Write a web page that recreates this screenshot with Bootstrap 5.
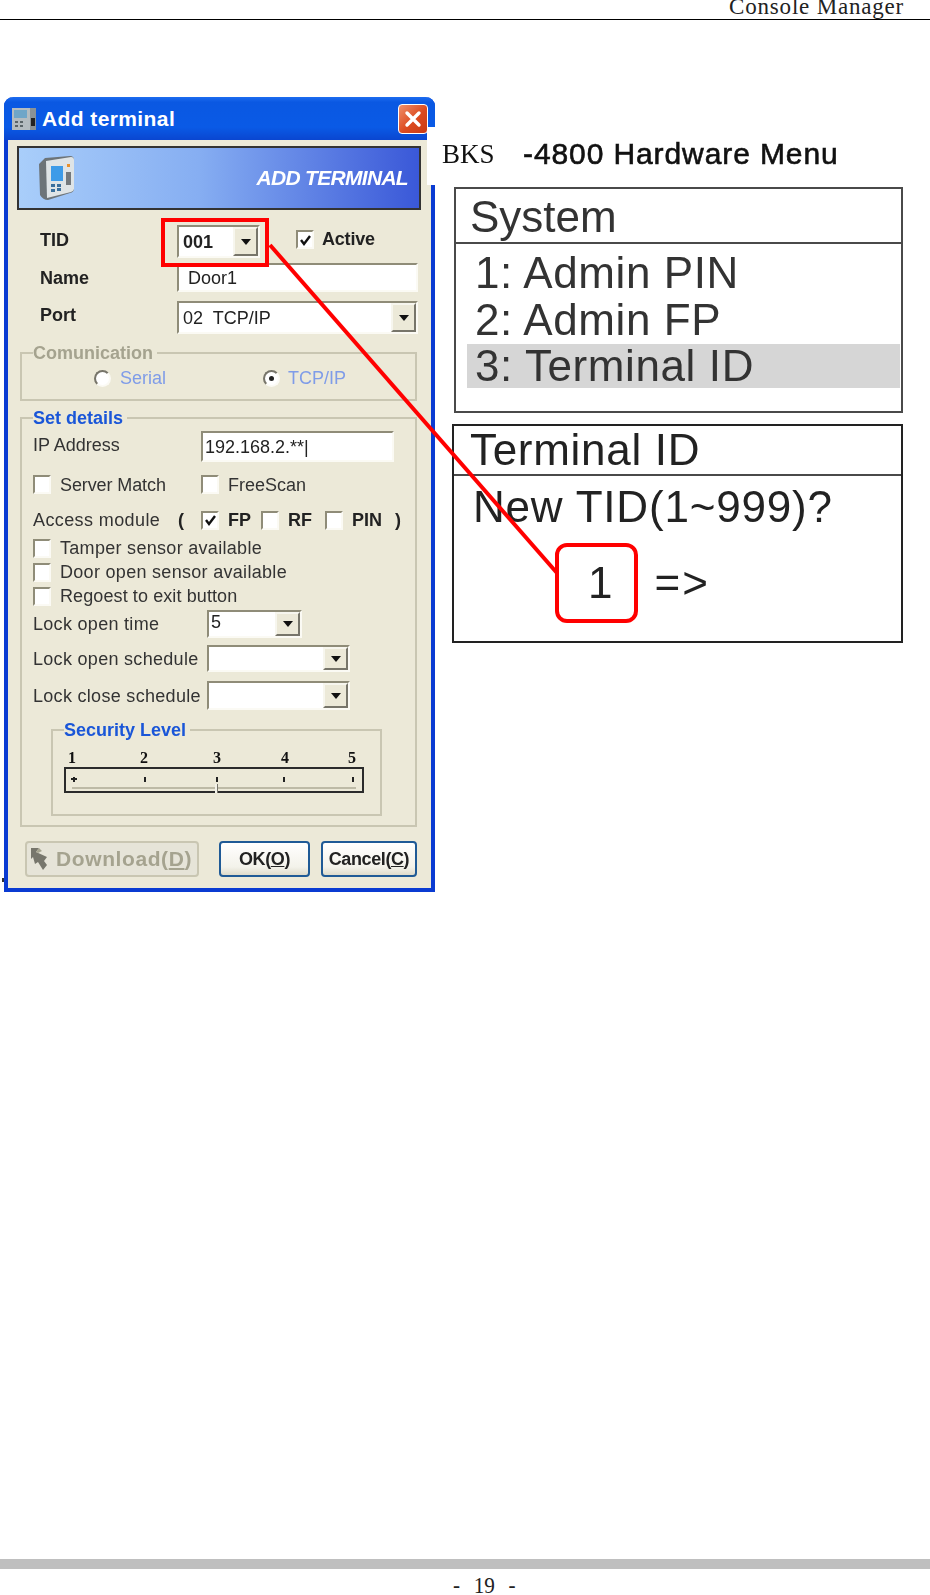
<!DOCTYPE html>
<html lang="en">
<head>
  <meta charset="UTF-8" />
  <meta name="viewport" content="width=device-width, initial-scale=1" />
  <title>Console Manager - 19</title>
  <link href="https://cdn.jsdelivr.net/npm/bootstrap@5.3.3/dist/css/bootstrap.min.css" rel="stylesheet" />
  <style>
    body { font-family: "Liberation Sans", Arial, sans-serif; color: #000; background: #fff; position: relative; }
    .page-head { height: 20px; border-bottom: 1px solid #000; padding-right: 26px; font: 23px/14px "Liberation Serif", serif; letter-spacing: .8px; color: #222; }
    .page-foot-bar { height: 10px; background: #bfbfbf; }
    .page-foot-num { height: 26px; padding-left: 42px; font: 23px/34px "Liberation Serif", serif; word-spacing: 9px; color: #222; transform: scaleX(.92); }

    .dlg { width: 431px; height: 795px; margin: 77px 0 0 4px; background: #ece9d8; border: solid #0a3bd2; border-width: 0 4px 4px; border-radius: 9px 9px 0 0; font-size: 18px; line-height: 20px; color: #333; flex: none; filter: blur(.35px); }
    .dlg-title { height: 43px; margin: 0 -4px; padding: 0 8px; border-radius: 9px 9px 0 0; background: linear-gradient(#1d6cf0, #0a58e2 12%, #0a5ae6 70%, #0a46d0); color: #fff; font-weight: 700; font-size: 21px; }
    .dlg-title span { margin-left: 6px; letter-spacing: .4px; }
    .dlg-close { width: 30px; height: 30px; margin-left: auto; margin-right: -1px; background: linear-gradient(135deg, #f0906a, #dc4a20 55%, #c83a14); border: 1px solid #fff; border-radius: 4px; }
    .dlg-banner { width: 404px; height: 64px; margin: 6px 0 0 9px; border: 2px solid #333; background: linear-gradient(90deg, #a9cefa, #86aef2 45%, #3a58d8); padding: 0 11px 0 19px; }
    .dlg-banner b { margin-left: auto; color: #fff; font-size: 21px; font-style: italic; letter-spacing: -.7px; }

    .frm-row { display: flex; align-items: center; }
    .frm-bold { font-weight: 700; color: #222; }
    .frm-lbl-top { width: 169px; padding: 0 0 4px 32px; flex: none; }
    .frm-lbl-name { padding-bottom: 0; }
    .frm-lbl-port { padding-bottom: 6px; }
    .frm-lbl-set { width: 168px; padding-bottom: 3px; flex: none; }
    .frm-lbl-lock { width: 174px; flex: none; letter-spacing: .3px; }
    .frm-box { background: #fff; border: 2px solid; border-color: #8f8c78 #fbfaf4 #fbfaf4 #8f8c78; display: flex; align-items: center; padding-left: 4px; color: #222; flex: none; }
    .frm-combo { padding-right: 0; }
    .frm-combo i { width: 25px; height: 100%; margin-left: auto; background: #ece9d8; border: 2px solid; border-color: #f7f6ee #77756a #77756a #f7f6ee; display: flex; align-items: center; justify-content: center; flex: none; }
    .frm-combo i::after { content: ""; border: 5px solid transparent; border-top: 6px solid #111; border-bottom: 0; }
    .frm-chk { width: 18px; height: 19px; background: #fff; border: 2px solid; border-color: #8f8c78 #fbfaf4 #fbfaf4 #8f8c78; flex: none; display: flex; align-items: center; justify-content: center; }
    .frm-radio { width: 17px; height: 17px; border-radius: 50%; background: #fff; border: 2px solid; border-color: #77756a #fbfaf4 #fbfaf4 #77756a; flex: none; display: flex; align-items: center; justify-content: center; }
    .frm-radio.on::after { content: ""; width: 5px; height: 5px; border-radius: 50%; background: #222; }
    .frm-txt { margin-left: 9px; }
    .frm-long { letter-spacing: .3px; }

    .r-tid { margin-top: 15px; height: 33px; }
    .r-name { margin-top: 5px; height: 29px; }
    .r-port { margin-top: 9px; height: 33px; }
    .r-radio { margin-top: 14px; padding-left: 72px; }
    .r-ip { margin-top: 12px; height: 31px; }
    .r-match { margin-top: 13px; height: 19px; }
    .r-access { margin-top: 16px; height: 20px; }
    .r-chk1 { margin-top: 9px; height: 18px; }
    .r-chk2 { margin-top: 6px; height: 18px; }
    .r-lock1 { margin-top: 5px; height: 28px; }
    .r-lock2 { margin-top: 7px; height: 27px; }
    .r-lock3 { margin-top: 9px; height: 29px; }

    .w-tid { width: 83px; height: 33px; }
    .w-name { width: 241px; height: 29px; padding-left: 9px; }
    .w-port { width: 241px; height: 33px; }
    .w-ip { width: 193px; height: 31px; padding-left: 2px; }
    .w-time { width: 95px; height: 28px; padding: 0 0 4px 2px; }
    .w-time i { height: calc(100% + 4px); margin-bottom: -4px; }
    .w-sch { width: 143px; height: 27px; }
    .w-sch-b { width: 143px; height: 29px; }
    .m-active { margin: 0 0 4px 36px; }
    .m-active-t { margin: 0 0 5px 8px; letter-spacing: -.2px; }
    .t-serial { margin-left: 9px; width: 143px; }
    .t-tcp { margin-left: 8px; }
    .t-match { width: 141px; letter-spacing: -.1px; }
    .t-access { width: 145px; flex: none; letter-spacing: .4px; }
    .t-paren { width: 23px; flex: none; }
    .t-fp { width: 33px; }
    .t-rf { width: 37px; }
    .t-pin { width: 43px; }
    .t-regoest { letter-spacing: .1px; }

    .grp { position: relative; border: 2px solid #c9c6b2; flex: none; }
    .grp-title { position: absolute; left: 11px; top: -10px; padding-right: 4px; background: #ece9d8; font-weight: 700; color: #1a56d8; line-height: 18px; }
    .grp-title.off { color: #a5a38f; }
    .grp-comm { width: 397px; height: 49px; margin: 18px 0 0 12px; color: #7f9ce8; }
    .grp-set { width: 397px; height: 410px; margin: 16px 0 0 12px; padding-left: 11px; }
    .grp-sec { width: 331px; height: 87px; margin: 19px 0 0 18px; }
    .sec-nums { height: 16px; margin-top: 19px; position: relative; font: 700 16px/16px "Liberation Serif", serif; color: #111; }
    .sec-nums span { position: absolute; top: 0; transform: translateX(-50%); }
    .sec-n1 { left: 19px; } .sec-n2 { left: 91px; } .sec-n3 { left: 164px; } .sec-n4 { left: 232px; } .sec-n5 { left: 299px; }
    .sec-track { width: 300px; height: 26px; margin: 1px 0 0 11px; border: 2px solid #2b2b2b; position: relative; }
    .sec-track em { position: absolute; top: 8px; width: 2px; height: 5px; background: #222; }
    .sec-t1 { left: 7px; } .sec-t2 { left: 78px; } .sec-t3 { left: 150px; } .sec-t4 { left: 217px; } .sec-t5 { left: 286px; }
    .sec-t1::after { content: ""; position: absolute; left: -2px; top: 1px; width: 6px; height: 2px; background: #222; }
    .sec-track u { position: absolute; left: 6px; right: 6px; top: 18px; height: 2px; background: #bdbaa6; }
    .sec-track s { position: absolute; left: 149px; top: 15px; width: 3px; height: 9px; background: #f4f3ea; border-right: 1px solid #77756a; }

    .dlg-btns { margin: 14px 0 0 17px; }
    .dlg-btn { height: 36px; padding: 0; border-radius: 4px; background: linear-gradient(#fff, #f3f2ea 75%, #dedbcb); border: 2px solid #1f5a96; font-weight: 700; color: #222; font-size: 18px; letter-spacing: -.4px; }
    .dlg-btn.off { width: 174px; padding-left: 3px; background: #e6e4d8; border-color: #c9c6b2; color: #a5a38f; font-size: 21px; letter-spacing: .6px; }
    .dlg-btn.off > span { margin-left: 6px; }
    .b-ok { width: 91px; margin-left: 20px; }
    .b-cancel { width: 96px; margin-left: 11px; }
    .speck { position: absolute; left: 2px; top: 878px; width: 2px; height: 4px; background: #333; }

    .hw-col { width: 476px; margin: 107px 0 0 -8px; position: relative; flex: none; }
    .hw-col > * { filter: blur(.4px); }
    .hw-head { height: 58px; background: #fff; padding: 0 0 4px 15px; }
    .hw-bks { width: 81px; font: 27px/1 "Liberation Serif", serif; color: #111; flex: none; }
    .hw-name { font-size: 30px; line-height: 1; color: #111; letter-spacing: .9px; -webkit-text-stroke: .6px #111; white-space: pre; }
    .hw-box { border: 2px solid #4a4a4a; font-size: 44px; line-height: 48px; color: #333; }
    .hw-sys { width: 449px; height: 226px; margin: 2px 0 0 27px; }
    .hw-term { width: 451px; height: 219px; margin: 11px 0 0 25px; border-color: #222; color: #222; }
    .hw-sep { height: 55px; border-bottom: 2px solid #4a4a4a; padding: 2px 0 0 14px; }
    .hw-items { padding: 6px 0 0 19px; letter-spacing: .6px; }
    .hw-items div { height: 47px; line-height: 46px; }
    .hw-items .hw-pick { background: #d6d6d6; margin: 0 1px 0 -8px; padding-left: 8px; height: 44px; line-height: 44px; }
    .hw-term .hw-sep { height: 50px; letter-spacing: .7px; padding: 0 0 0 16px; }
    .hw-ask { padding: 7px 0 0 19px; letter-spacing: .8px; white-space: nowrap; }
    .hw-entry { padding: 28px 0 0 134px; gap: 42px; }
    .hw-entry span:last-child { letter-spacing: 2px; }

    .over-marks { position: absolute; left: 0; top: 0; pointer-events: none; z-index: 5; }
  </style>
</head>
<body class="d-flex flex-column min-vh-100">
  <div class="page-head d-flex justify-content-end">Console Manager</div>

  <div class="d-flex align-items-start">
    <!-- dialog -->
    <div class="dlg">
      <div class="dlg-title d-flex align-items-center">
        <svg width="24" height="24" viewBox="0 0 24 24">
          <rect x="0" y="1" width="18" height="22" fill="#b4bcc0"/>
          <rect x="2" y="3" width="13" height="8" fill="#6fa6c8"/>
          <path d="M3 14h3v2H3zM8 14h3v2H8zM3 18h3v2H3zM8 18h3v2H8z" fill="#5a6468"/>
          <rect x="18" y="1" width="6" height="22" fill="#8a9296"/>
          <rect x="19" y="11" width="4" height="8" fill="#222"/>
        </svg>
        <span>Add terminal</span>
        <div class="dlg-close d-flex align-items-center justify-content-center">
          <svg width="18" height="18" viewBox="0 0 18 18"><path d="M3 3L15 15M15 3L3 15" stroke="#fff" stroke-width="3.4" stroke-linecap="round"/></svg>
        </div>
      </div>
      <div class="dlg-banner d-flex align-items-center">
        <svg width="38" height="46" viewBox="0 0 38 46">
          <path d="M1 9L7 3L32 1Q36 1 36 5V34Q36 37 32 38L10 45Q5 45 2 40Z" fill="#6d7478"/>
          <path d="M8 6L33 2Q36 2 36 5V34Q36 36 33 37L9 43Z" fill="#dfe4e6"/>
          <rect x="13" y="11" width="12" height="15" fill="#3d9be8"/>
          <rect x="29" y="9" width="3" height="3" fill="#e8902c"/>
          <rect x="28" y="17" width="5" height="13" fill="#74797c"/>
          <path d="M13 29h4v3h-4zM19 29h4v3h-4zM13 34h4v3h-4zM19 33h4v3h-4z" fill="#3a6f9c"/>
        </svg>
        <b>ADD TERMINAL</b>
      </div>

      <div class="frm-row frm-bold r-tid">
        <div class="frm-lbl-top">TID</div>
        <div class="frm-box frm-combo w-tid">001<i></i></div>
        <div class="frm-chk m-active">
          <svg width="13" height="12" viewBox="0 0 13 12"><path d="M2 6L5 10L11 2" fill="none" stroke="#111" stroke-width="2.4"/></svg>
        </div>
        <div class="m-active-t">Active</div>
      </div>
      <div class="frm-row r-name">
        <div class="frm-lbl-top frm-lbl-name frm-bold">Name</div>
        <div class="frm-box w-name">Door1</div>
      </div>
      <div class="frm-row r-port">
        <div class="frm-lbl-top frm-lbl-port frm-bold">Port</div>
        <div class="frm-box frm-combo w-port">02&nbsp; TCP/IP<i></i></div>
      </div>

      <div class="grp grp-comm">
        <div class="grp-title off">Comunication</div>
        <div class="frm-row r-radio">
          <div class="frm-radio"></div>
          <div class="t-serial">Serial</div>
          <div class="frm-radio on"></div>
          <div class="t-tcp">TCP/IP</div>
        </div>
      </div>

      <div class="grp grp-set">
        <div class="grp-title">Set details</div>
        <div class="frm-row r-ip">
          <div class="frm-lbl-set">IP Address</div>
          <div class="frm-box w-ip">192.168.2.**|</div>
        </div>
        <div class="frm-row r-match">
          <div class="frm-chk"></div><div class="frm-txt t-match">Server Match</div>
          <div class="frm-chk"></div><div class="frm-txt">FreeScan</div>
        </div>
        <div class="frm-row r-access">
          <div class="t-access">Access module</div>
          <div class="frm-bold t-paren">(</div>
          <div class="frm-chk">
            <svg width="13" height="12" viewBox="0 0 13 12"><path d="M2 6L5 10L11 2" fill="none" stroke="#111" stroke-width="2.4"/></svg>
          </div>
          <div class="frm-bold frm-txt t-fp">FP</div>
          <div class="frm-chk"></div>
          <div class="frm-bold frm-txt t-rf">RF</div>
          <div class="frm-chk"></div>
          <div class="frm-bold frm-txt t-pin">PIN</div>
          <div class="frm-bold">)</div>
        </div>
        <div class="frm-row r-chk1"><div class="frm-chk"></div><div class="frm-txt frm-long">Tamper sensor available</div></div>
        <div class="frm-row r-chk2"><div class="frm-chk"></div><div class="frm-txt frm-long">Door open sensor available</div></div>
        <div class="frm-row r-chk2"><div class="frm-chk"></div><div class="frm-txt t-regoest">Regoest to exit button</div></div>
        <div class="frm-row r-lock1">
          <div class="frm-lbl-lock">Lock open time</div>
          <div class="frm-box frm-combo w-time">5<i></i></div>
        </div>
        <div class="frm-row r-lock2">
          <div class="frm-lbl-lock">Lock open schedule</div>
          <div class="frm-box frm-combo w-sch"><i></i></div>
        </div>
        <div class="frm-row r-lock3">
          <div class="frm-lbl-lock">Lock close schedule</div>
          <div class="frm-box frm-combo w-sch-b"><i></i></div>
        </div>
        <div class="grp grp-sec">
          <div class="grp-title">Security Level</div>
          <div class="sec-nums">
            <span class="sec-n1">1</span><span class="sec-n2">2</span><span class="sec-n3">3</span><span class="sec-n4">4</span><span class="sec-n5">5</span>
          </div>
          <div class="sec-track">
            <em class="sec-t1"></em><em class="sec-t2"></em><em class="sec-t3"></em><em class="sec-t4"></em><em class="sec-t5"></em>
            <u></u><s></s>
          </div>
        </div>
      </div>

      <div class="dlg-btns d-flex">
        <button class="dlg-btn off d-flex align-items-center" disabled>
          <svg width="20" height="24" viewBox="0 0 20 24">
            <path d="M1 1L9 1L6 5L17 10L14 14L17 18L13 23L8 15L5 17L3 10L1 12Z" fill="#77766c"/>
            <path d="M9 1L12 4L8 6L17 10L6 5Z" fill="#a5a38f"/>
          </svg>
          <span>Download(<span class="text-decoration-underline">D</span>)</span>
        </button>
        <button class="dlg-btn b-ok">OK(<span class="text-decoration-underline">O</span>)</button>
        <button class="dlg-btn b-cancel">Cancel(<span class="text-decoration-underline">C</span>)</button>
      </div>
    </div>

    <!-- hardware menu -->
    <div class="hw-col">
      <div class="hw-head d-flex align-items-center">
        <div class="hw-bks">BKS</div>
        <div class="hw-name">-4800 Hardware Menu</div>
      </div>
      <div class="hw-box hw-sys">
        <div class="hw-sep d-flex align-items-center">System</div>
        <div class="hw-items">
          <div>1: Admin PIN</div>
          <div>2: Admin FP</div>
          <div class="hw-pick">3: Terminal ID</div>
        </div>
      </div>
      <div class="hw-box hw-term">
        <div class="hw-sep d-flex align-items-center">Terminal ID</div>
        <div class="hw-ask">New TID(1~999)?</div>
        <div class="hw-entry d-flex"><span>1</span><span>=&gt;</span></div>
      </div>
    </div>
  </div>

  <div class="mt-auto">
    <div class="page-foot-bar"></div>
    <div class="page-foot-num text-center">- 19 -</div>
  </div>

  <div class="speck"></div>

  <!-- red marks drawn over the dialog and the menu -->
  <svg class="over-marks" width="930" height="700" viewBox="0 0 930 700">
    <rect x="163" y="220" width="104" height="45" fill="none" stroke="#f00" stroke-width="4"/>
    <path d="M270 245L557 573" fill="none" stroke="#f00" stroke-width="4"/>
    <rect x="557" y="545" width="79" height="76" rx="10" fill="none" stroke="#f00" stroke-width="4"/>
  </svg>
</body>
</html>
